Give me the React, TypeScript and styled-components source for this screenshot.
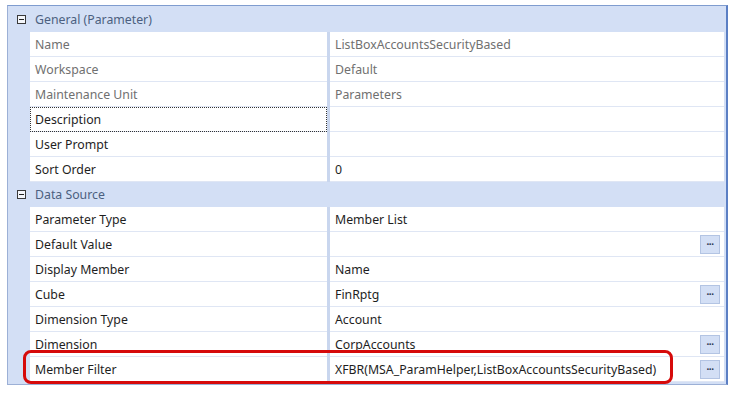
import styled, { createGlobalStyle } from "styled-components";

const GlobalStyle = createGlobalStyle`
  html, body {
    margin: 0;
    padding: 0;
    background: #ffffff;
  }
  body {
    font-family: "Noto Sans", "Open Sans", "Liberation Sans", sans-serif;
    font-size: 12.3px;
  }
`;

const Page = styled.div`
  width: 738px;
  height: 393px;
  padding: 5px 0 0 7px;
  box-sizing: border-box;
  position: relative;
`;

const Grid = styled.div`
  width: 721px;
  height: 380px;
  box-sizing: border-box;
  background: #d3dff5;
  border: 1px solid #9cb0d6;
  border-right: 2px solid #5b7fc4;
  border-top-color: #7f9ccf;
  padding: 1px 2px 0 0;
  display: flex;
  flex-direction: column;
`;

const Category = styled.div`
  height: 25px;
  display: flex;
  align-items: center;
  color: #4c5f80;
`;

const Toggle = styled.span`
  width: 22px;
  display: flex;
  justify-content: center;
  padding-left: 2px;
`;

const MinusBox = styled.span`
  width: 7px;
  height: 7px;
  border: 1px solid #3a3a3a;
  position: relative;
  background: #f4f6fa;

  &::after {
    content: "";
    position: absolute;
    left: 1px;
    right: 1px;
    top: 3px;
    height: 1px;
    background: #222;
  }
`;

const CategoryLabel = styled.span`
  padding-left: 3px;
`;

const Row = styled.div`
  height: 25px;
  display: grid;
  grid-template-columns: 22px 297px 3px 1fr;
`;

const NameCell = styled.div<{ $muted?: boolean; $focused?: boolean }>`
  background: #ffffff;
  display: flex;
  align-items: center;
  padding-left: 5px;
  color: ${({ $muted }) => ($muted ? "#707070" : "#1e1e1e")};
  border-bottom: 1px solid #dfe6f4;
  box-sizing: border-box;
  outline: ${({ $focused }) => ($focused ? "1px dotted #333" : "none")};
  outline-offset: -1px;
`;

const Splitter = styled.div`
  background: #c9d6ee;
`;

const ValueCell = styled.div<{ $muted?: boolean }>`
  background: #ffffff;
  display: flex;
  align-items: center;
  justify-content: space-between;
  padding-left: 5px;
  padding-right: 4px;
  color: ${({ $muted }) => ($muted ? "#707070" : "#1e1e1e")};
  border-bottom: 1px solid #dfe6f4;
  box-sizing: border-box;
`;

const EllipsisButton = styled.span`
  width: 20px;
  height: 19px;
  box-sizing: border-box;
  background: #d3dff5;
  border: 1px solid #b3c4e3;
  color: #2a3550;
  font-size: 10px;
  font-weight: bold;
  line-height: 10px;
  display: flex;
  align-items: center;
  justify-content: center;
  letter-spacing: -0.5px;
`;

const Highlight = styled.div`
  position: absolute;
  left: 23px;
  top: 350px;
  width: 650px;
  height: 34px;
  box-sizing: border-box;
  border: 3px solid #d60a0a;
  border-radius: 8px;
  pointer-events: none;
`;

type Prop = {
  name: string;
  value: string;
  muted?: boolean;
  focused?: boolean;
  button?: boolean;
};

type Section = { title: string; props: Prop[] };

const sections: Section[] = [
  {
    title: "General (Parameter)",
    props: [
      { name: "Name", value: "ListBoxAccountsSecurityBased", muted: true },
      { name: "Workspace", value: "Default", muted: true },
      { name: "Maintenance Unit", value: "Parameters", muted: true },
      { name: "Description", value: "", focused: true },
      { name: "User Prompt", value: "" },
      { name: "Sort Order", value: "0" },
    ],
  },
  {
    title: "Data Source",
    props: [
      { name: "Parameter Type", value: "Member List" },
      { name: "Default Value", value: "", button: true },
      { name: "Display Member", value: "Name" },
      { name: "Cube", value: "FinRptg", button: true },
      { name: "Dimension Type", value: "Account" },
      { name: "Dimension", value: "CorpAccounts", button: true },
      {
        name: "Member Filter",
        value: "XFBR(MSA_ParamHelper,ListBoxAccountsSecurityBased)",
        button: true,
      },
    ],
  },
];

export default function App() {
  return (
    <>
      <GlobalStyle />
      <Page>
        <Grid>
          {sections.map((s) => (
            <div key={s.title}>
              <Category>
                <Toggle>
                  <MinusBox />
                </Toggle>
                <CategoryLabel>{s.title}</CategoryLabel>
              </Category>
              {s.props.map((p) => (
                <Row key={p.name}>
                  <span />
                  <NameCell $muted={p.muted} $focused={p.focused}>
                    {p.name}
                  </NameCell>
                  <Splitter />
                  <ValueCell $muted={p.muted}>
                    <span>{p.value}</span>
                    {p.button && <EllipsisButton>···</EllipsisButton>}
                  </ValueCell>
                </Row>
              ))}
            </div>
          ))}
        </Grid>
        <Highlight />
      </Page>
    </>
  );
}
